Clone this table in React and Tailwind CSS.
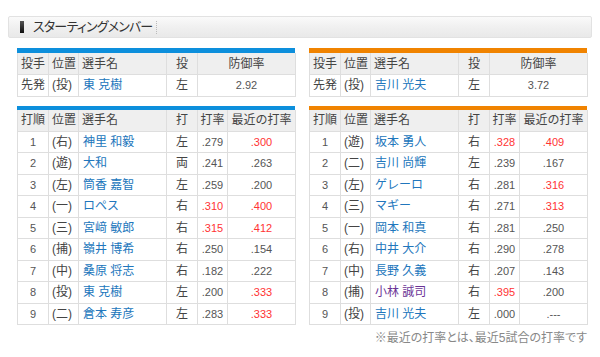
import React from 'react';

const FONT = "font-['Liberation_Sans','Noto_Sans_CJK_JP',sans-serif]";

const pitchers = {
  home: { role: '先発', pos: '(投)', name: '東 克樹', hand: '左', era: '2.92' },
  away: { role: '先発', pos: '(投)', name: '吉川 光夫', hand: '左', era: '3.72' },
};

const homeLineup = [
  ['1', '(右)', '神里 和毅', '左', '.279', '.300', false, true],
  ['2', '(遊)', '大和', '両', '.241', '.263', false, false],
  ['3', '(左)', '筒香 嘉智', '左', '.259', '.200', false, false],
  ['4', '(一)', 'ロペス', '右', '.310', '.400', true, true],
  ['5', '(三)', '宮﨑 敏郎', '右', '.315', '.412', true, true],
  ['6', '(捕)', '嶺井 博希', '右', '.250', '.154', false, false],
  ['7', '(中)', '桑原 将志', '右', '.182', '.222', false, false],
  ['8', '(投)', '東 克樹', '左', '.200', '.333', false, true],
  ['9', '(二)', '倉本 寿彦', '左', '.283', '.333', false, true],
];

const awayLineup = [
  ['1', '(遊)', '坂本 勇人', '右', '.328', '.409', true, true],
  ['2', '(二)', '吉川 尚輝', '左', '.239', '.167', false, false],
  ['3', '(左)', 'ゲレーロ', '右', '.281', '.316', false, true],
  ['4', '(三)', 'マギー', '右', '.271', '.313', false, true],
  ['5', '(一)', '岡本 和真', '右', '.281', '.250', false, false],
  ['6', '(右)', '中井 大介', '右', '.290', '.278', false, false],
  ['7', '(中)', '長野 久義', '右', '.207', '.143', false, false],
  ['8', '(捕)', '小林 誠司', '右', '.395', '.200', true, false, true],
  ['9', '(投)', '吉川 光夫', '左', '.000', '.---', false, false],
];

const cell = 'border-r border-b border-[#dedede] flex items-center';

function PitcherTable({ bar, p }) {
  return (
    <div className="w-[278px]">
      <div className={`h-[5px] ${bar}`} />
      <div className="grid grid-cols-[31px_30px_88px_31px_98px] border-l border-[#dedede] text-[12px] text-[#444]">
        <div className={`${cell} h-[22px] bg-[#efefef] pl-[3px]`}>投手</div>
        <div className={`${cell} h-[22px] bg-[#efefef] pl-[3px]`}>位置</div>
        <div className={`${cell} h-[22px] bg-[#efefef] pl-[3px]`}>選手名</div>
        <div className={`${cell} h-[22px] bg-[#efefef] justify-center`}>投</div>
        <div className={`${cell} h-[22px] bg-[#efefef] justify-center`}>防御率</div>
        <div className={`${cell} h-[21.5px] pl-[3px]`}>{p.role}</div>
        <div className={`${cell} h-[21.5px] pl-[3px]`}>{p.pos}</div>
        <div className={`${cell} h-[21.5px] pl-[4px] text-[#2176bc]`}>{p.name}</div>
        <div className={`${cell} h-[21.5px] justify-center`}>{p.hand}</div>
        <div className={`${cell} h-[21.5px] justify-center text-[11px] text-[#555]`}>{p.era}</div>
      </div>
    </div>
  );
}

function LineupTable({ bar, rows }) {
  return (
    <div className="w-[278px]">
      <div className={`h-[4px] ${bar}`} />
      <div className="grid grid-cols-[31px_30px_88px_31px_30px_68px] border-l border-[#dedede] text-[12px] text-[#444]">
        {['打順', '位置', '選手名'].map((h) => (
          <div key={h} className={`${cell} h-[22px] bg-[#efefef] pl-[3px]`}>{h}</div>
        ))}
        {['打', '打率', '最近の打率'].map((h) => (
          <div key={h} className={`${cell} h-[22px] bg-[#efefef] justify-center`}>{h}</div>
        ))}
        {rows.map(([no, pos, name, hand, avg, recent, avgRed, recentRed, purple]) => (
          <React.Fragment key={no}>
            <div className={`${cell} h-[21.5px] justify-center text-[11px] text-[#555]`}>{no}</div>
            <div className={`${cell} h-[21.5px] pl-[3px]`}>{pos}</div>
            <div className={`${cell} h-[21.5px] pl-[4px] ${purple ? 'text-[#6b3396]' : 'text-[#2176bc]'}`}>{name}</div>
            <div className={`${cell} h-[21.5px] justify-center`}>{hand}</div>
            <div className={`${cell} h-[21.5px] justify-center text-[11px] ${avgRed ? 'text-[#ff3333]' : 'text-[#555]'}`}>{avg}</div>
            <div className={`${cell} h-[21.5px] justify-center text-[11px] ${recentRed ? 'text-[#ff3333]' : 'text-[#555]'}`}>{recent}</div>
          </React.Fragment>
        ))}
      </div>
    </div>
  );
}

export default function App() {
  return (
    <div className={`w-[600px] h-[357px] bg-white pt-[16px] ${FONT}`}>
      {/* Section heading */}
      <div className="mx-[8px] h-[22px] rounded-[2px] border border-[#e2e2e2] bg-gradient-to-b from-[#fafafa] via-[#f0f0f0] to-[#e9e9e9] flex items-center">
        <div className="ml-[11px] w-[4px] h-[12px] bg-gradient-to-b from-[#555] to-[#111]" />
        <span className="ml-[9px] text-[13px] text-[#333] tracking-[-0.8px] [font-feature-settings:'palt']">スターティングメンバー</span>
        <div className="ml-[4px] h-[13px] border-l border-dotted border-[#bbb]" />
      </div>

      <div className="px-[17px] mt-[10px] flex gap-[14px]">
        <PitcherTable bar="bg-[#0d8fdc]" p={pitchers.home} />
        <PitcherTable bar="bg-[#f08300]" p={pitchers.away} />
      </div>

      <div className="px-[17px] mt-[9px] flex gap-[14px]">
        <LineupTable bar="bg-[#0d8fdc]" rows={homeLineup} />
        <LineupTable bar="bg-[#f08300]" rows={awayLineup} />
      </div>

      <div className="w-[587px] mt-[4px] text-right text-[12px] text-[#888] [font-feature-settings:'palt']">
        ※最近の打率とは、最近5試合の打率です
      </div>
    </div>
  );
}
